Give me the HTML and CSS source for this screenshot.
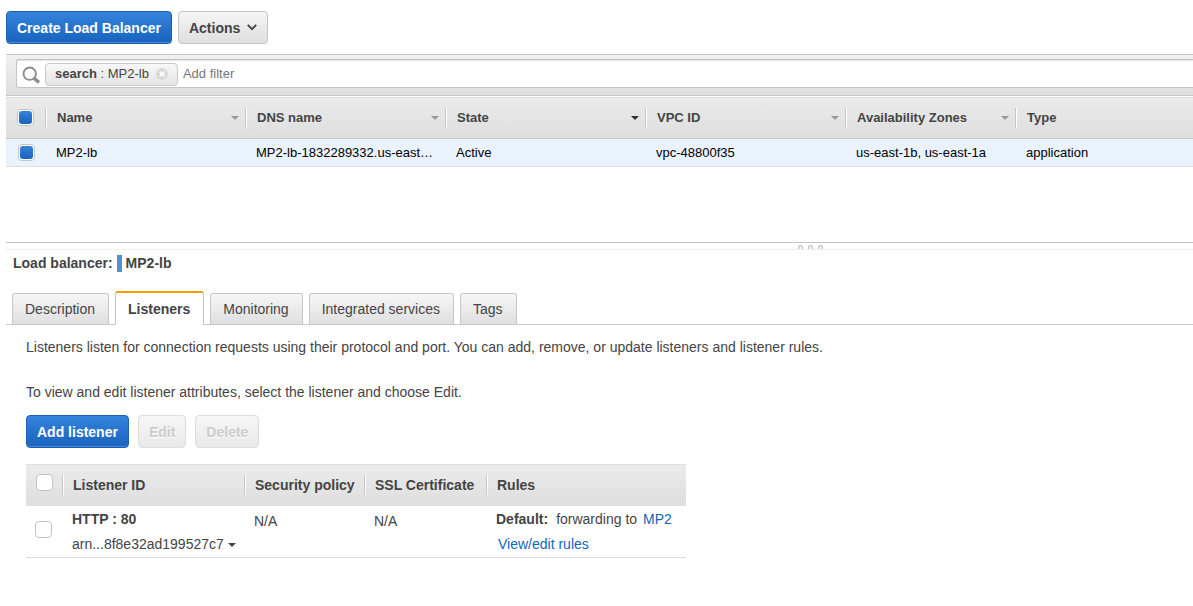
FILE: index.html
```html
<!DOCTYPE html>
<html lang="en">
<head>
<meta charset="utf-8">
<title>Load Balancers</title>
<link rel="stylesheet" href="styles.css">
</head>
<body>
<div class="toolbar">
  <button class="btn primary" type="button">Create Load Balancer</button>
  <button class="btn" type="button">Actions
    <svg class="chevron" width="10" height="7" viewBox="0 0 10 7"><path d="M.8 .8l4.2 4.4L9.2 .8" fill="none" stroke="#444" stroke-width="1.9"/></svg>
  </button>
</div>

<div class="filter-bar">
  <div class="filter-box">
    <svg class="magnifier" width="19" height="19" viewBox="0 0 19 19"><circle cx="7.7" cy="7.7" r="6.2" fill="none" stroke="#8c8c8c" stroke-width="1.9"/><path d="M12.2 12.2l4.8 4.4" stroke="#8c8c8c" stroke-width="3.4"/></svg>
    <span class="chip"><span><b>search</b> : MP2-lb</span>
      <button class="chip-close" type="button" aria-label="Remove filter"><svg width="12" height="12" viewBox="0 0 12 12"><circle cx="6" cy="6" r="6" fill="#d8d8d8"/><path d="M3.6 3.6l4.8 4.8M8.4 3.6l-4.8 4.8" stroke="#fff" stroke-width="1.5"/></svg></button>
    </span>
    <input class="filter-input" type="text" placeholder="Add filter" aria-label="Add filter">
  </div>
</div>

<table class="balancers">
  <colgroup><col class="c-check"><col class="c-wide"><col class="c-wide"><col class="c-wide"><col class="c-wide"><col class="c-zone"><col></colgroup>
  <thead>
    <tr>
      <th><input class="check" type="checkbox" checked aria-label="Select all"></th>
      <th><div class="head">Name<i class="arrow"></i></div></th>
      <th><div class="head">DNS name<i class="arrow"></i></div></th>
      <th><div class="head">State<i class="arrow sorted"></i></div></th>
      <th><div class="head">VPC ID<i class="arrow"></i></div></th>
      <th><div class="head">Availability Zones<i class="arrow"></i></div></th>
      <th><div class="head">Type</div></th>
    </tr>
  </thead>
  <tbody>
    <tr>
      <td><input class="check" type="checkbox" checked aria-label="Select MP2-lb"></td>
      <td>MP2-lb</td>
      <td>MP2-lb-1832289332.us-east…</td>
      <td>Active</td>
      <td>vpc-48800f35</td>
      <td>us-east-1b, us-east-1a</td>
      <td>application</td>
    </tr>
  </tbody>
</table>

<div class="splitter">
  <svg width="26" height="4" viewBox="0 0 26 4"><g fill="none" stroke="#c4c4c4" stroke-width="1.4"><path d="M.7 4V2Q.7 .7 2.5 .7T4.3 2V4"/><path d="M10.7 4V2Q10.7 .7 12.5 .7T14.3 2V4"/><path d="M20.7 4V2Q20.7 .7 22.5 .7T24.3 2V4"/></g></svg>
</div>

<h2 class="title">Load balancer: <span class="marker"></span> MP2-lb</h2>

<div class="tabs" role="tablist">
  <button class="tab" type="button" role="tab">Description</button>
  <button class="tab active" type="button" role="tab" aria-selected="true">Listeners</button>
  <button class="tab" type="button" role="tab">Monitoring</button>
  <button class="tab" type="button" role="tab">Integrated services</button>
  <button class="tab" type="button" role="tab">Tags</button>
</div>

<div class="panel">
  <p>Listeners listen for connection requests using their protocol and port. You can add, remove, or update listeners and listener rules.</p>
  <p>To view and edit listener attributes, select the listener and choose Edit.</p>
  <div class="actions">
    <button class="btn primary" type="button">Add listener</button>
    <button class="btn" type="button" disabled>Edit</button>
    <button class="btn" type="button" disabled>Delete</button>
  </div>
  <table class="listeners">
    <colgroup><col class="l-check"><col class="l-id"><col class="l-policy"><col class="l-cert"><col></colgroup>
    <thead>
      <tr>
        <th><input class="check" type="checkbox" aria-label="Select all listeners"></th>
        <th><div class="head">Listener ID</div></th>
        <th><div class="head">Security policy</div></th>
        <th><div class="head">SSL Certificate</div></th>
        <th><div class="head">Rules</div></th>
      </tr>
    </thead>
    <tbody>
      <tr>
        <td><input class="check" type="checkbox" aria-label="Select HTTP : 80"></td>
        <td><div class="line"><b>HTTP : 80</b></div><div class="line">arn...8f8e32ad199527c7 <i class="arrow"></i></div></td>
        <td class="na">N/A</td>
        <td class="na">N/A</td>
        <td><div class="line rule"><b>Default:</b><span>forwarding to</span><a href="#">MP2</a></div><div class="line edit"><a href="#">View/edit rules</a></div></td>
      </tr>
    </tbody>
  </table>
</div>
</body>
</html>
```
FILE: styles.css
```css
* { box-sizing: border-box; }
body {
  margin: 0;
  padding: 11px 0 0 6px;
  background: #fff;
  color: #444;
  font: 14px/20px "Liberation Sans", Arial, sans-serif;
}
button, input { font: inherit; color: inherit; margin: 0; }
a { color: #1166bb; text-decoration: none; }

.toolbar { display: flex; gap: 6px; margin-bottom: 10px; }
.btn {
  height: 33px;
  padding: 0 10px;
  border: 1px solid #c3c3c3;
  border-radius: 4px;
  background: linear-gradient(#f5f5f5, #dfdfdf);
  font-weight: bold;
  white-space: nowrap;
}
.btn.primary {
  border-color: #1a5fb4;
  background: linear-gradient(#3583dc, #1763bd);
  box-shadow: inset 0 -1px 1px #4a8bd8;
  color: #fff;
}
.btn:disabled {
  border-color: #ddd;
  background: linear-gradient(#f6f6f6, #e9e9e9);
  color: #ccc;
  text-shadow: 0 1px 0 #fff;
}
.chevron { margin-left: 3px; vertical-align: 2px; }

.filter-bar {
  padding: 4px 0 7px 10px;
  border: solid #c8c8c8;
  border-width: 1px 0;
  background: linear-gradient(#f0f0f0, #dedede);
}
.filter-box {
  display: flex;
  align-items: center;
  height: 29px;
  padding: 1px 0 0 5px;
  border: 1px solid #c4c4c4;
  border-right: 0;
  border-radius: 3px 0 0 3px;
  background: #fff;
  box-shadow: inset 0 1px 1px #e4e4e4;
  font-size: 13px;
}
.magnifier { margin-top: 2px; }
.chip {
  display: flex;
  align-items: center;
  gap: 7px;
  height: 23px;
  margin: 0 5px 0 4px;
  padding: 0 9px;
  border: 1px solid #c8c8c8;
  border-radius: 4px;
  background: linear-gradient(#f8f8f8, #e4e4e4);
  white-space: nowrap;
}
.chip-close { display: flex; padding: 0; border: 0; background: none; }
.filter-input { flex: 1; min-width: 0; padding: 0; border: 0; outline: 0; background: none; }
.filter-input::placeholder { color: #777; opacity: 1; }

table { border-collapse: separate; border-spacing: 0; table-layout: fixed; text-align: left; }
th, td { padding: 0; }
thead th {
  height: 42px;
  border-top: 1px solid #ddd;
  background: linear-gradient(#ebebeb, #dedede);
}
.head {
  display: flex;
  align-items: center;
  justify-content: space-between;
  height: 20px;
  padding: 0 7px 0 10px;
  border-left: 1px solid #fff;
  box-shadow: -1px 0 #c6c6c6;
  white-space: nowrap;
}
.arrow {
  display: inline-block;
  border: 4px solid transparent;
  border-top-color: #999;
  border-bottom: 0;
}
.arrow.sorted { border-top-color: #333; }
.check {
  appearance: none;
  display: block;
  width: 17px;
  height: 17px;
  border: 1px solid #c4c4c4;
  border-radius: 4px;
  background: #fff;
}
.check:checked { padding: 1px; }
.check:checked::before {
  content: "";
  display: block;
  height: 13px;
  border-radius: 3px;
  background: linear-gradient(#3583dc, #1763bd);
}

.balancers { width: 100%; margin-top: 1px; font-size: 13px; }
.balancers thead th { border-bottom: 1px solid #c8c8c8; }
.balancers th:first-child { padding: 0 0 2px 11px; }
.balancers td {
  height: 28px;
  padding-left: 10px;
  border-bottom: 1px solid #ddd;
  background: #eaf2fe;
  color: #000;
  white-space: nowrap;
}
.balancers td:first-child { padding: 0 0 1px 12px; }
.c-check { width: 40px; }
.c-wide { width: 200px; }
.c-zone { width: 170px; }

.splitter {
  display: flex;
  align-items: flex-end;
  height: 8px;
  margin-top: 75px;
  padding-left: 66.7%;
  border-top: 1px solid #c4c4c4;
  border-bottom: 1px solid #eee;
}
.title {
  display: flex;
  align-items: center;
  gap: 4px;
  margin: 4px 0 19px;
  padding-left: 7px;
  font-size: 14px;
  line-height: 18px;
}
.marker { width: 5px; height: 17px; background: #5191d1; }

.tabs {
  display: flex;
  align-items: flex-end;
  gap: 6px;
  padding-left: 6px;
  border-bottom: 1px solid #c8c8c8;
}
.tab {
  height: 31px;
  padding: 0 13px 0 12px;
  border: 1px solid #c8c8c8;
  border-bottom: 0;
  border-radius: 3px 3px 0 0;
  background: linear-gradient(#f6f6f6, #dfdfdf);
  white-space: nowrap;
}
.tab.active {
  height: 34px;
  margin-bottom: -1px;
  border-top: 2px solid #f90;
  background: #fff;
  font-weight: bold;
}

.panel { padding: 12px 20px 0; }
.panel p { margin: 0 0 25px; }
.panel p + p { margin-bottom: 13px; }
.actions { display: flex; gap: 9px; margin-bottom: 16px; }
.listeners { width: 660px; max-width: 100%; }
.listeners th { padding-bottom: 2px; }
.listeners th:first-child { padding: 0 0 6px 10px; }
.listeners .head { padding-left: 9px; }
.listeners td { padding: 0 0 0 9px; border-bottom: 1px solid #ddd; vertical-align: top; white-space: nowrap; }
.listeners td:first-child { vertical-align: middle; padding-bottom: 5px; }
.line { height: 25px; line-height: 26px; }
.line:last-child { height: 26px; }
.line .arrow { vertical-align: 2px; border-top-color: #444; }
.listeners td.na { padding-top: 5px; }
.rule { display: flex; gap: 8px; }
.rule a { margin-left: -2px; }
.edit { padding-left: 2px; }
.l-check { width: 37px; }
.l-id { width: 182px; }
.l-policy { width: 120px; }
.l-cert { width: 122px; }
```
